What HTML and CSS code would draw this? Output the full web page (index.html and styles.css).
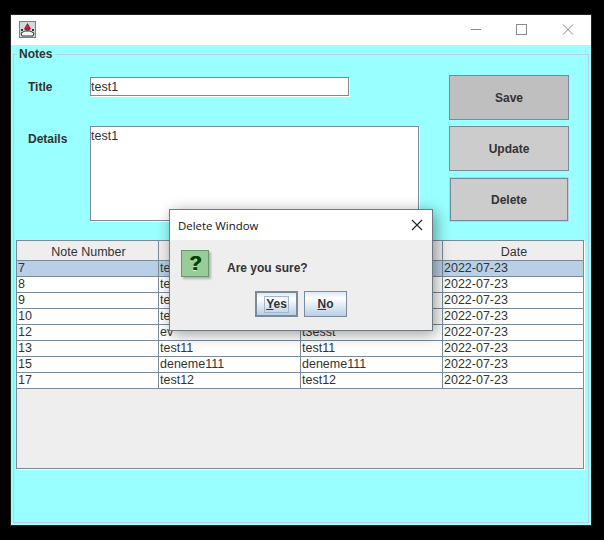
FILE: index.html
```html
<!DOCTYPE html>
<html lang="en">
<head>
  <meta charset="UTF-8">
  <title>Notes</title>
  <link rel="stylesheet" href="styles.css">
</head>
<body>

  <div class="window">
    <div class="titlebar">
      <svg class="app-icon" width="17" height="17" viewBox="0 0 17 17">
        <rect x="0.5" y="0.5" width="16" height="16" fill="#d5d8dc" stroke="#777f88"/>
        <path d="M2 12 L6 10 L11 10 L15 12 L14 15 L3 15 Z" fill="#f4f4f4" stroke="#30343a"/>
        <path d="M5 8 L8.500 2 L12 8 L8.500 10 Z" fill="#3a3f46"/>
        <circle cx="8.500" cy="6.500" r="2" fill="#e0162b"/>
        <rect x="2" y="8" width="2" height="2" fill="#30343a"/>
        <rect x="13" y="8" width="2" height="2" fill="#30343a"/>
      </svg>
      <div class="caption-buttons">
        <svg width="46" height="30" viewBox="0 0 46 30"><path d="M18 14.500 H28" stroke="#8a8a8a"/></svg>
        <svg width="46" height="30" viewBox="0 0 46 30"><rect x="17.500" y="9.500" width="10" height="10" fill="none" stroke="#8a8a8a"/></svg>
        <svg width="46" height="30" viewBox="0 0 46 30"><path d="M18 9.500 L28 19.500 M28 9.500 L18 19.500" stroke="#8a8a8a"/></svg>
      </div>
    </div>

    <div class="content">
      <fieldset class="notes">
        <legend>Notes</legend>

        <div class="form">
          <div class="fields">
            <div class="field title-field">
              <label for="title">Title</label>
              <input type="text" id="title" value="test1">
            </div>
            <div class="field details-field">
              <label for="details">Details</label>
              <textarea id="details">test1</textarea>
            </div>
          </div>

          <div class="actions">
            <button class="btn btn-save">Save</button>
            <button class="btn">Update</button>
            <button class="btn btn-delete">Delete</button>
          </div>
        </div>

        <div class="table-pane">
          <table>
            <thead>
              <tr>
                <th>Note Number</th>
                <th>Title</th>
                <th>Details</th>
                <th>Date</th>
              </tr>
            </thead>
            <tbody>
              <tr class="selected"><td>7</td><td>test1</td><td>test1</td><td>2022-07-23</td></tr>
              <tr><td>8</td><td>test2</td><td>test2</td><td>2022-07-23</td></tr>
              <tr><td>9</td><td>test3</td><td>test3</td><td>2022-07-23</td></tr>
              <tr><td>10</td><td>test4</td><td>test4</td><td>2022-07-23</td></tr>
              <tr><td>12</td><td>ev</td><td>t3esst</td><td>2022-07-23</td></tr>
              <tr><td>13</td><td>test11</td><td>test11</td><td>2022-07-23</td></tr>
              <tr><td>15</td><td>deneme111</td><td>deneme111</td><td>2022-07-23</td></tr>
              <tr><td>17</td><td>test12</td><td>test12</td><td>2022-07-23</td></tr>
            </tbody>
          </table>
        </div>
      </fieldset>
    </div>
  </div>

  <div class="dialog">
    <div class="dialog-title">
      <span>Delete Window</span>
      <svg width="12" height="12" viewBox="0 0 12 12"><path d="M1 1 L11 11 M11 1 L1 11" stroke="#222" stroke-width="1.100"/></svg>
    </div>
    <div class="dialog-body">
      <div class="message">
        <div class="question-icon">?</div>
        <span class="message-text">Are you sure?</span>
      </div>
      <div class="dialog-buttons">
        <button class="dlg-btn dlg-btn-focus"><span class="focus-rect"><u>Y</u>es</span></button>
        <button class="dlg-btn"><u>N</u>o</button>
      </div>
    </div>
  </div>

</body>
</html>
```

FILE: styles.css
```css
body {
  margin: 0;
  height: 540px;
  background: #000;
  color: #333;
  font-family: "Liberation Sans", Arial, sans-serif;
  font-size: 12.5px;
  overflow: hidden;
}

.window {
  width: 580px;
  height: 510px;
  margin: 15px 0 0 11px;
  background: #99ffff;
  box-shadow: 0 0 0 1px #222;
}

.titlebar {
  display: flex;
  justify-content: space-between;
  align-items: center;
  height: 30px;
  padding-left: 8px;
  background: #fff;
}

.app-icon {
  margin-bottom: 2px;
}

.caption-buttons {
  display: flex;
}

.content {
  padding: 1px 2px 0;
}

.notes {
  height: 477px;
  margin: 0;
  padding: 0;
  border: 1px solid #b8cfe5;
  box-sizing: border-box;
  min-width: 0;
}

.notes legend {
  margin: 0 0 -1px 3px;
  padding: 1px 2px 0;
  font-size: 12px;
  font-weight: bold;
  line-height: 15px;
}

.form {
  display: flex;
  padding-top: 14px;
}

.fields {
  width: 391px;
  padding: 2px 0 0 14px;
}

.field {
  display: flex;
}

.field label {
  width: 62px;
  font-size: 12px;
  font-weight: bold;
}

.title-field label {
  padding-top: 1px;
  line-height: 19px;
}

.details-field {
  margin-top: 29px;
}

.details-field label {
  padding-top: 6px;
}

input, textarea {
  margin: 0;
  padding: 0;
  box-sizing: border-box;
  border: 1px solid #7a8a99;
  box-shadow: 1px 1px 0 #fff;
  background: #fff;
  color: #333;
  font-family: inherit;
  font-size: inherit;
  outline: none;
}

input {
  width: 259px;
  height: 19px;
}

textarea {
  width: 329px;
  height: 95px;
  padding-top: 2px;
  resize: none;
  overflow: hidden;
  line-height: 15px;
}

.actions {
  display: flex;
  flex-direction: column;
  gap: 6px;
  margin-left: 30px;
}

.btn {
  width: 120px;
  height: 45px;
  padding: 0;
  box-sizing: border-box;
  border: 1px solid #7a8a99;
  background: #cccccc;
  color: #333;
  font-family: inherit;
  font-size: 12px;
  font-weight: bold;
}

.btn-save {
  background: #bfbfbf;
}

.btn-delete {
  border-color: #b8cfe5;
  box-shadow: inset 0 0 0 1px #7388a3;
}

.table-pane {
  width: 568px;
  height: 229px;
  margin: 18px 0 0 2px;
  box-sizing: border-box;
  border: 1px solid #7a8a99;
  box-shadow: 1px 1px 0 #fff;
  background: #eeeeee;
}

table {
  width: 566px;
  table-layout: fixed;
  border-collapse: separate;
  border-spacing: 0;
}

th, td {
  width: 142px;
  padding: 0 1px;
  box-sizing: border-box;
  border-right: 1px solid #7a8a99;
  border-bottom: 1px solid #7a8a99;
  overflow: hidden;
  white-space: nowrap;
}

th:last-child, td:last-child {
  width: 140px;
  border-right: none;
}

th {
  height: 20px;
  padding: 2px 0 0 2px;
  background: #eeeeee;
  font-weight: normal;
  text-align: center;
}

td {
  height: 16px;
  line-height: 15px;
  background: #fff;
}

.selected td {
  background: #b8cfe5;
}

.dialog {
  position: absolute;
  left: 169px;
  top: 209px;
  width: 264px;
  height: 122px;
  box-sizing: border-box;
  border: 1px solid #6e7a80;
  background: #eeeeee;
  box-shadow: 3px 3px 14px rgba(0, 0, 0, 0.4);
}

.dialog-title {
  display: flex;
  justify-content: space-between;
  align-items: center;
  height: 30px;
  padding: 0 9px 0 8px;
  background: #fff;
  color: #111;
  font-family: "Open Sans", "Noto Sans", sans-serif;
  font-size: 11.4px;
}

.dialog-body {
  padding: 10px 0 0 11px;
}

.message {
  display: flex;
  align-items: center;
  gap: 18px;
  font-size: 12px;
  font-weight: bold;
}

.message-text {
  padding-top: 8px;
}

.question-icon {
  width: 28px;
  height: 27px;
  box-sizing: border-box;
  border: 1px solid #669966;
  background: #99cc99;
  box-shadow: 2px 2px 2px rgba(0, 0, 0, 0.25);
  color: #004400;
  font-size: 20px;
  line-height: 25px;
  text-align: center;
  text-shadow: 1px 0 0 #004400, 0 1px 1px #ddffdd;
}

.dialog-buttons {
  display: flex;
  justify-content: center;
  gap: 6px;
  margin: 14px 0 0 -11px;
}

.dlg-btn {
  width: 43px;
  height: 26px;
  padding: 0;
  box-sizing: border-box;
  border: 1px solid #7a8a99;
  background: linear-gradient(#dde8f3, #fff 25%, #b8cfe5);
  color: #333;
  font-family: inherit;
  font-size: 12px;
  font-weight: bold;
}

.dlg-btn-focus {
  border-width: 2px;
}

.focus-rect {
  display: inline-block;
  padding: 0 1px;
  line-height: 15px;
  border: 1px solid #a3b8cc;
}
```
